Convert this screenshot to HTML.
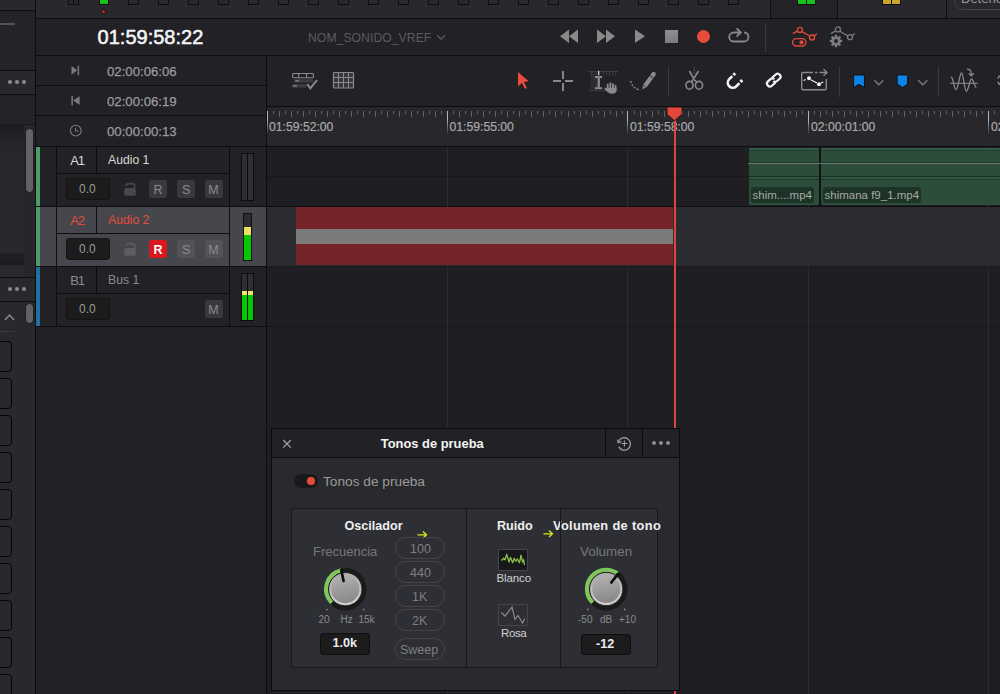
<!DOCTYPE html>
<html><head><meta charset="utf-8"><style>
*{box-sizing:border-box;margin:0;padding:0}
html,body{width:1000px;height:694px;overflow:hidden;background:#1f1f23;font-family:"Liberation Sans",sans-serif}
.a{position:absolute}
.hl{position:absolute;height:1px;background:#0d0d10}
.vl{position:absolute;width:1px;background:#0d0d10}
.t{position:absolute;white-space:nowrap;line-height:1}
svg{position:absolute;overflow:visible}
</style></head><body>
<div class="a" style="left:0px;top:0px;width:36px;height:694px;background:#28282d;"></div>
<div class="hl" style="left:0px;top:10px;width:36px;"></div>
<div class="a" style="left:0px;top:11px;width:35px;height:59px;background:#232328;"></div>
<div class="a" style="left:0px;top:23.2px;width:15px;height:1.6px;background:#4f535b;"></div>
<div class="hl" style="left:0px;top:70px;width:36px;"></div>
<div class="a" style="left:7.8px;top:79.6px;width:4.4px;height:4.4px;background:#8c8c8c;border-radius:50%"></div>
<div class="a" style="left:14.8px;top:79.6px;width:4.4px;height:4.4px;background:#8c8c8c;border-radius:50%"></div>
<div class="a" style="left:21.8px;top:79.6px;width:4.4px;height:4.4px;background:#8c8c8c;border-radius:50%"></div>
<div class="hl" style="left:0px;top:94px;width:36px;"></div>
<div class="a" style="left:0px;top:95px;width:35px;height:29px;background:#232328;"></div>
<div class="hl" style="left:0px;top:124px;width:36px;background:#18181b"></div>
<div class="a" style="left:0px;top:125px;width:24px;height:152px;background:linear-gradient(#1c1c20,#26262b 22px,#28282d 40px);"></div>
<div class="a" style="left:24px;top:125px;width:11px;height:152px;background:#26262b;"></div>
<div class="a" style="left:25px;top:127.5px;width:8.5px;height:65.5px;background:#5f6269;border-radius:4.3px;border:1px solid #1c1c20"></div>
<div class="a" style="left:0px;top:253px;width:24px;height:12px;background:linear-gradient(#202024,#1b1b1f);"></div>
<div class="hl" style="left:0px;top:277px;width:36px;"></div>
<div class="a" style="left:7.8px;top:286.5px;width:4.4px;height:4.4px;background:#8c8c8c;border-radius:50%"></div>
<div class="a" style="left:14.8px;top:286.5px;width:4.4px;height:4.4px;background:#8c8c8c;border-radius:50%"></div>
<div class="a" style="left:21.8px;top:286.5px;width:4.4px;height:4.4px;background:#8c8c8c;border-radius:50%"></div>
<div class="hl" style="left:0px;top:301px;width:36px;"></div>
<div class="a" style="left:25px;top:302.5px;width:8.5px;height:21px;background:#5f6269;border-radius:4.3px;border:1px solid #1c1c20"></div>
<svg style="left:4px;top:313px" width="11" height="8" viewBox="0 0 11 8"><path d="M1 7 L5.5 2 L10 7" fill="none" stroke="#8c8c8c" stroke-width="1.5"/></svg>
<div class="a" style="left:0px;top:331px;width:15px;height:1px;background:#3a3a40;"></div>
<div class="a" style="left:-6px;top:341px;width:17.5px;height:30.5px;background:transparent;border:1.5px solid #060607;border-radius:4px"></div>
<div class="a" style="left:-6px;top:378px;width:17.5px;height:30.5px;background:transparent;border:1.5px solid #060607;border-radius:4px"></div>
<div class="a" style="left:-6px;top:415px;width:17.5px;height:30.5px;background:transparent;border:1.5px solid #060607;border-radius:4px"></div>
<div class="a" style="left:-6px;top:452px;width:17.5px;height:30.5px;background:transparent;border:1.5px solid #060607;border-radius:4px"></div>
<div class="a" style="left:-6px;top:489px;width:17.5px;height:30.5px;background:transparent;border:1.5px solid #060607;border-radius:4px"></div>
<div class="a" style="left:-6px;top:526px;width:17.5px;height:30.5px;background:transparent;border:1.5px solid #060607;border-radius:4px"></div>
<div class="a" style="left:-6px;top:563px;width:17.5px;height:30.5px;background:transparent;border:1.5px solid #060607;border-radius:4px"></div>
<div class="a" style="left:-6px;top:600px;width:17.5px;height:30.5px;background:transparent;border:1.5px solid #060607;border-radius:4px"></div>
<div class="a" style="left:-6px;top:637px;width:17.5px;height:30.5px;background:transparent;border:1.5px solid #060607;border-radius:4px"></div>
<div class="a" style="left:-6px;top:674px;width:17.5px;height:30.5px;background:transparent;border:1.5px solid #060607;border-radius:4px"></div>
<div class="vl" style="left:35px;top:0px;height:694px;"></div>
<div class="a" style="left:36px;top:0px;width:964px;height:18px;background:#28282d;"></div>
<div class="a" style="left:771px;top:0px;width:67px;height:18px;background:#232328;"></div>
<div class="vl" style="left:770px;top:0px;height:18px;"></div>
<div class="vl" style="left:837px;top:0px;height:18px;"></div>
<div class="vl" style="left:946px;top:0px;height:18px;"></div>
<div class="a" style="left:68px;top:-1px;width:11px;height:6px;background:transparent;border:1px solid #0d0d10"></div>
<div class="vl" style="left:73px;top:0px;height:5px;"></div>
<div class="a" style="left:98.5px;top:-1px;width:10px;height:6px;background:#18c41c;border:1px solid #0d0d10"></div>
<div class="a" style="left:128px;top:-1px;width:11px;height:6px;background:transparent;border:1px solid #0d0d10"></div>
<div class="a" style="left:158px;top:-1px;width:11px;height:6px;background:transparent;border:1px solid #0d0d10"></div>
<div class="a" style="left:188px;top:-1px;width:11px;height:6px;background:transparent;border:1px solid #0d0d10"></div>
<div class="a" style="left:218px;top:-1px;width:11px;height:6px;background:transparent;border:1px solid #0d0d10"></div>
<div class="a" style="left:248px;top:-1px;width:11px;height:6px;background:transparent;border:1px solid #0d0d10"></div>
<div class="a" style="left:278px;top:-1px;width:11px;height:6px;background:transparent;border:1px solid #0d0d10"></div>
<div class="a" style="left:308px;top:-1px;width:11px;height:6px;background:transparent;border:1px solid #0d0d10"></div>
<div class="a" style="left:338px;top:-1px;width:11px;height:6px;background:transparent;border:1px solid #0d0d10"></div>
<div class="a" style="left:368px;top:-1px;width:11px;height:6px;background:transparent;border:1px solid #0d0d10"></div>
<div class="a" style="left:398px;top:-1px;width:11px;height:6px;background:transparent;border:1px solid #0d0d10"></div>
<div class="a" style="left:428px;top:-1px;width:11px;height:6px;background:transparent;border:1px solid #0d0d10"></div>
<div class="a" style="left:458px;top:-1px;width:11px;height:6px;background:transparent;border:1px solid #0d0d10"></div>
<div class="a" style="left:488px;top:-1px;width:11px;height:6px;background:transparent;border:1px solid #0d0d10"></div>
<div class="a" style="left:518px;top:-1px;width:11px;height:6px;background:transparent;border:1px solid #0d0d10"></div>
<div class="a" style="left:548px;top:-1px;width:11px;height:6px;background:transparent;border:1px solid #0d0d10"></div>
<div class="a" style="left:578px;top:-1px;width:11px;height:6px;background:transparent;border:1px solid #0d0d10"></div>
<div class="a" style="left:608px;top:-1px;width:11px;height:6px;background:transparent;border:1px solid #0d0d10"></div>
<div class="a" style="left:638px;top:-1px;width:11px;height:6px;background:transparent;border:1px solid #0d0d10"></div>
<div class="a" style="left:668px;top:-1px;width:11px;height:6px;background:transparent;border:1px solid #0d0d10"></div>
<div class="a" style="left:698px;top:-1px;width:11px;height:6px;background:transparent;border:1px solid #0d0d10"></div>
<div class="a" style="left:728px;top:-1px;width:11px;height:6px;background:transparent;border:1px solid #0d0d10"></div>
<div class="a" style="left:101.6px;top:9.5px;width:3.8px;height:3.8px;background:#e0202a;border-radius:50%;box-shadow:0 0 0 0.8px #111"></div>
<div class="a" style="left:797px;top:-1px;width:19px;height:6px;background:#18c41c;border:1px solid #0d0d10"></div>
<div class="vl" style="left:806px;top:0px;height:5px;"></div>
<div class="a" style="left:882px;top:-1px;width:19px;height:6px;background:#c9a52a;border:1px solid #0d0d10"></div>
<div class="vl" style="left:891px;top:0px;height:5px;"></div>
<div class="a" style="left:954px;top:-12px;width:70px;height:22px;background:transparent;border:1.3px solid #3f454b;border-radius:9px"></div>
<div class="t" style="left:961px;top:-8px;font-size:13px;color:#9a9a9a;font-weight:400;">Detener</div>
<div class="hl" style="left:36px;top:18px;width:964px;"></div>
<div class="a" style="left:36px;top:19px;width:964px;height:36px;background:#212126;"></div>
<div class="hl" style="left:36px;top:55px;width:964px;"></div>
<div class="a" style="left:36px;top:56px;width:230px;height:90px;background:#212126;"></div>
<div class="hl" style="left:36px;top:85px;width:230px;"></div>
<div class="hl" style="left:36px;top:115px;width:230px;"></div>
<div class="hl" style="left:36px;top:146px;width:964px;"></div>
<div class="a" style="left:267px;top:56px;width:733px;height:50px;background:#212126;"></div>
<div class="hl" style="left:266px;top:106px;width:734px;"></div>
<div class="a" style="left:267px;top:107px;width:733px;height:39px;background:#27272c;"></div>
<div class="vl" style="left:266px;top:55px;height:639px;"></div>
<div class="a" style="left:36px;top:147px;width:230px;height:547px;background:#222226;"></div>
<div class="t" style="left:97.6px;top:27px;font-size:20px;color:#f4f4f4;font-weight:400;-webkit-text-stroke:0.55px #f4f4f4">01:59:58:22</div>
<div class="t" style="left:107px;top:65px;font-size:13.2px;color:#9c9c9c;font-weight:400;-webkit-text-stroke:0.25px #9c9c9c">02:00:06:06</div>
<div class="t" style="left:107px;top:95px;font-size:13.2px;color:#9c9c9c;font-weight:400;-webkit-text-stroke:0.25px #9c9c9c">02:00:06:19</div>
<div class="t" style="left:107px;top:125px;font-size:13.2px;color:#9c9c9c;font-weight:400;-webkit-text-stroke:0.25px #9c9c9c">00:00:00:13</div>
<svg style="left:70px;top:64px" width="14" height="14" viewBox="0 0 14 14"><path d="M1.5 2 L7.3 6.3 L1.5 10.8 Z" fill="#7a7a7a"/><rect x="7.6" y="1.6" width="1.5" height="9.5" fill="#7a7a7a"/></svg>
<svg style="left:70px;top:94px" width="14" height="14" viewBox="0 0 14 14"><rect x="1.4" y="1.8" width="1.5" height="9.5" fill="#7a7a7a"/><path d="M9.6 2.2 L3.2 6.5 L9.6 10.9 Z" fill="#7a7a7a"/></svg>
<svg style="left:69px;top:124px" width="14" height="14" viewBox="0 0 14 14"><circle cx="6.8" cy="6.6" r="5.4" fill="none" stroke="#7a7a7a" stroke-width="1.15"/><path d="M6.6 3.6 V7 H9.6" fill="none" stroke="#7a7a7a" stroke-width="1.15"/></svg>
<div class="a" style="left:36px;top:147px;width:4px;height:59px;background:#4e9a6a;"></div>
<div class="a" style="left:40px;top:147px;width:226px;height:59px;background:#222226;"></div>
<div class="a" style="left:230px;top:147px;width:36px;height:59px;background:#222226;"></div>
<div class="vl" style="left:56px;top:146px;height:60px;"></div>
<div class="vl" style="left:96px;top:146px;height:27px;"></div>
<div class="hl" style="left:56px;top:173px;width:174px;"></div>
<div class="vl" style="left:229px;top:146px;height:60px;"></div>
<div class="t" style="left:70.3px;top:154px;font-size:13px;color:#d8d8d8;font-weight:400;letter-spacing:-1.2px">A1</div>
<div class="t" style="left:108px;top:154px;font-size:12.2px;color:#d8d8d8;font-weight:400;">Audio 1</div>
<div class="a" style="left:66px;top:178px;width:44px;height:21.5px;background:#1c1c1c;border:1px solid #141414;border-radius:3px"></div>
<div class="t" style="left:79px;top:183px;font-size:12px;color:#9a9a9a;font-weight:400;">0.0</div>
<svg style="left:123px;top:182px" width="14" height="15" viewBox="0 0 14 15"><path d="M2.6 3.8 Q3.6 1.6 5.6 1.6 H9.4 Q11.6 1.6 11.6 3.8 V6.5" fill="none" stroke="#48484c" stroke-width="1.6"/><rect x="1.1" y="6" width="11.7" height="7.8" rx="1.8" fill="#48484c"/></svg>
<div class="a" style="left:149px;top:180px;width:18px;height:18px;background:#3a3a3e;border-radius:3px"></div>
<div class="t" style="left:153.5px;top:184px;font-size:12.5px;color:#8a8a8a;font-weight:400;">R</div>
<div class="a" style="left:177px;top:180px;width:18px;height:18px;background:#3a3a3e;border-radius:3px"></div>
<div class="t" style="left:182px;top:184px;font-size:12.5px;color:#8a8a8a;font-weight:400;">S</div>
<div class="a" style="left:205px;top:180px;width:18px;height:18px;background:#3a3a3e;border-radius:3px"></div>
<div class="t" style="left:208.3px;top:184px;font-size:12.5px;color:#8a8a8a;font-weight:400;">M</div>
<div class="hl" style="left:36px;top:206px;width:230px;"></div>
<div class="a" style="left:36px;top:207px;width:4px;height:59px;background:#4e9a6a;"></div>
<div class="a" style="left:40px;top:207px;width:226px;height:59px;background:#45474d;"></div>
<div class="a" style="left:230px;top:207px;width:36px;height:59px;background:#45474d;"></div>
<div class="vl" style="left:56px;top:206px;height:60px;"></div>
<div class="vl" style="left:96px;top:206px;height:27px;"></div>
<div class="hl" style="left:56px;top:233px;width:174px;"></div>
<div class="vl" style="left:229px;top:206px;height:60px;"></div>
<div class="t" style="left:70.3px;top:214px;font-size:13px;color:#e64b3c;font-weight:400;letter-spacing:-1.2px">A2</div>
<div class="t" style="left:108px;top:214px;font-size:12.2px;color:#e64b3c;font-weight:400;">Audio 2</div>
<div class="a" style="left:66px;top:238px;width:44px;height:21.5px;background:#1c1c1c;border:1px solid #141414;border-radius:3px"></div>
<div class="t" style="left:79px;top:243px;font-size:12px;color:#9a9a9a;font-weight:400;">0.0</div>
<svg style="left:123px;top:242px" width="14" height="15" viewBox="0 0 14 15"><path d="M2.6 3.8 Q3.6 1.6 5.6 1.6 H9.4 Q11.6 1.6 11.6 3.8 V6.5" fill="none" stroke="#5c5d62" stroke-width="1.6"/><rect x="1.1" y="6" width="11.7" height="7.8" rx="1.8" fill="#5c5d62"/></svg>
<div class="a" style="left:149px;top:240px;width:18px;height:18px;background:#d9171d;border-radius:3px"></div>
<div class="t" style="left:153.5px;top:244px;font-size:12.5px;color:#ffffff;font-weight:700;">R</div>
<div class="a" style="left:177px;top:240px;width:18px;height:18px;background:#515359;border-radius:3px"></div>
<div class="t" style="left:182px;top:244px;font-size:12.5px;color:#8a8a8a;font-weight:400;">S</div>
<div class="a" style="left:205px;top:240px;width:18px;height:18px;background:#515359;border-radius:3px"></div>
<div class="t" style="left:208.3px;top:244px;font-size:12.5px;color:#8a8a8a;font-weight:400;">M</div>
<div class="hl" style="left:36px;top:266px;width:230px;"></div>
<div class="a" style="left:36px;top:267px;width:4px;height:59px;background:#2170a0;"></div>
<div class="a" style="left:40px;top:267px;width:226px;height:59px;background:#222226;"></div>
<div class="a" style="left:230px;top:267px;width:36px;height:59px;background:#222226;"></div>
<div class="vl" style="left:56px;top:266px;height:60px;"></div>
<div class="vl" style="left:96px;top:266px;height:27px;"></div>
<div class="hl" style="left:56px;top:293px;width:174px;"></div>
<div class="vl" style="left:229px;top:266px;height:60px;"></div>
<div class="t" style="left:70.3px;top:274px;font-size:13px;color:#8a8a8a;font-weight:400;letter-spacing:-1.2px">B1</div>
<div class="t" style="left:108px;top:274px;font-size:12.2px;color:#8a8a8a;font-weight:400;">Bus 1</div>
<div class="a" style="left:66px;top:298px;width:44px;height:21.5px;background:#1c1c1c;border:1px solid #141414;border-radius:3px"></div>
<div class="t" style="left:79px;top:303px;font-size:12px;color:#9a9a9a;font-weight:400;">0.0</div>
<div class="a" style="left:205px;top:300px;width:18px;height:18px;background:#3a3a3e;border-radius:3px"></div>
<div class="t" style="left:208.3px;top:304px;font-size:12.5px;color:#8a8a8a;font-weight:400;">M</div>
<div class="hl" style="left:36px;top:326px;width:230px;"></div>
<div class="a" style="left:241.2px;top:153px;width:12.6px;height:48px;background:#0c0c0e;"></div>
<div class="a" style="left:242px;top:154px;width:5px;height:46px;background:#2e2e33;"></div>
<div class="a" style="left:248px;top:154px;width:5px;height:46px;background:#2e2e33;"></div>
<div class="a" style="left:241.2px;top:273px;width:12.6px;height:48px;background:#0c0c0e;"></div>
<div class="a" style="left:242px;top:274px;width:5px;height:46px;background:#2e2e33;"></div>
<div class="a" style="left:248px;top:274px;width:5px;height:46px;background:#2e2e33;"></div>
<div class="a" style="left:242px;top:290.8px;width:5px;height:4px;background:#f0e26e;"></div>
<div class="a" style="left:242px;top:294.8px;width:5px;height:25.19999999999999px;background:#05c805;"></div>
<div class="a" style="left:248px;top:290.8px;width:5px;height:4px;background:#f0e26e;"></div>
<div class="a" style="left:248px;top:294.8px;width:5px;height:25.19999999999999px;background:#05c805;"></div>
<div class="a" style="left:243px;top:213px;width:9px;height:48px;background:#0f0f12;"></div>
<div class="a" style="left:244px;top:214px;width:7px;height:13px;background:#2c2c31;"></div>
<div class="a" style="left:244px;top:227px;width:7px;height:8px;background:#ece062;"></div>
<div class="a" style="left:244px;top:235px;width:7px;height:25px;background:#05c805;"></div>
<div class="a" style="left:267px;top:147px;width:733px;height:59px;background:#1f1f23;"></div>
<div class="hl" style="left:267px;top:176px;width:733px;background:#18181b"></div>
<div class="a" style="left:267px;top:207px;width:733px;height:59px;background:#2b2c30;"></div>
<div class="a" style="left:267px;top:267px;width:733px;height:427px;background:#1f1f23;"></div>
<div class="hl" style="left:267px;top:206px;width:733px;"></div>
<div class="hl" style="left:267px;top:265.5px;width:733px;background:#1a1a1d"></div>
<div class="hl" style="left:267px;top:326px;width:733px;background:#18181b"></div>
<div class="vl" style="left:447px;top:147px;height:547px;background:#2a2b2e"></div>
<div class="vl" style="left:627px;top:147px;height:547px;background:#2a2b2e"></div>
<div class="vl" style="left:808px;top:147px;height:547px;background:#2a2b2e"></div>
<div class="vl" style="left:988px;top:147px;height:547px;background:#2a2b2e"></div>
<div class="a" style="left:749px;top:148px;width:70px;height:57px;background:#2d4d3b;border-radius:2px"></div>
<div class="a" style="left:749px;top:148px;width:70px;height:2.3px;background:#335a44;border-radius:2px 2px 0 0"></div>
<div class="hl" style="left:749px;top:150.3px;width:70px;background:#243b2e"></div>
<div class="hl" style="left:749px;top:162.2px;width:70px;background:#233a2d"></div>
<div class="hl" style="left:749px;top:176px;width:70px;background:#1c2f24"></div>
<div class="a" style="left:749px;top:177px;width:70px;height:2px;background:#315542;"></div>
<div class="hl" style="left:749px;top:179px;width:70px;background:#1f3629"></div>
<div class="a" style="left:751px;top:187px;width:63px;height:15.5px;background:#1e3327;border-radius:3px"></div>
<div class="t" style="left:752.5px;top:189.5px;font-size:11.5px;color:#a6aaa6;font-weight:400;">shim....mp4</div>
<div class="a" style="left:821px;top:148px;width:200px;height:57px;background:#2d4d3b;border-radius:2px"></div>
<div class="a" style="left:821px;top:148px;width:200px;height:2.3px;background:#335a44;border-radius:2px 2px 0 0"></div>
<div class="hl" style="left:821px;top:150.3px;width:200px;background:#243b2e"></div>
<div class="hl" style="left:821px;top:162.2px;width:200px;background:#233a2d"></div>
<div class="hl" style="left:821px;top:176px;width:200px;background:#1c2f24"></div>
<div class="a" style="left:821px;top:177px;width:200px;height:2px;background:#315542;"></div>
<div class="hl" style="left:821px;top:179px;width:200px;background:#1f3629"></div>
<div class="a" style="left:823px;top:187px;width:97.5px;height:15.5px;background:#1e3327;border-radius:3px"></div>
<div class="t" style="left:824.5px;top:189.5px;font-size:11.5px;color:#a6aaa6;font-weight:400;">shimana f9_1.mp4</div>
<div class="a" style="left:819px;top:147px;width:2px;height:59px;background:#131316;"></div>
<div class="hl" style="left:748px;top:163px;width:252px;background:#6d7a72"></div>
<div class="a" style="left:296px;top:207px;width:377px;height:58px;background:#76232a;"></div>
<div class="a" style="left:296px;top:229px;width:377px;height:15px;background:#7b7b7b;"></div>
<div class="a" style="left:273px;top:111px;width:1px;height:3px;background:#626268;"></div>
<div class="a" style="left:279px;top:111px;width:1px;height:6px;background:#626268;"></div>
<div class="a" style="left:285px;top:111px;width:1px;height:3px;background:#626268;"></div>
<div class="a" style="left:291px;top:111px;width:1px;height:6px;background:#626268;"></div>
<div class="a" style="left:297px;top:111px;width:1px;height:3px;background:#626268;"></div>
<div class="a" style="left:303px;top:111px;width:1px;height:6px;background:#626268;"></div>
<div class="a" style="left:309px;top:111px;width:1px;height:3px;background:#626268;"></div>
<div class="a" style="left:315px;top:111px;width:1px;height:6px;background:#626268;"></div>
<div class="a" style="left:321px;top:111px;width:1px;height:3px;background:#626268;"></div>
<div class="a" style="left:327px;top:111px;width:1px;height:6px;background:#626268;"></div>
<div class="a" style="left:333px;top:111px;width:1px;height:3px;background:#626268;"></div>
<div class="a" style="left:339px;top:111px;width:1px;height:6px;background:#626268;"></div>
<div class="a" style="left:345px;top:111px;width:1px;height:3px;background:#626268;"></div>
<div class="a" style="left:351px;top:111px;width:1px;height:6px;background:#626268;"></div>
<div class="a" style="left:357px;top:111px;width:1px;height:3px;background:#626268;"></div>
<div class="a" style="left:363px;top:111px;width:1px;height:6px;background:#626268;"></div>
<div class="a" style="left:369px;top:111px;width:1px;height:3px;background:#626268;"></div>
<div class="a" style="left:375px;top:111px;width:1px;height:6px;background:#626268;"></div>
<div class="a" style="left:381px;top:111px;width:1px;height:3px;background:#626268;"></div>
<div class="a" style="left:387px;top:111px;width:1px;height:6px;background:#626268;"></div>
<div class="a" style="left:393px;top:111px;width:1px;height:3px;background:#626268;"></div>
<div class="a" style="left:399px;top:111px;width:1px;height:6px;background:#626268;"></div>
<div class="a" style="left:405px;top:111px;width:1px;height:3px;background:#626268;"></div>
<div class="a" style="left:411px;top:111px;width:1px;height:6px;background:#626268;"></div>
<div class="a" style="left:417px;top:111px;width:1px;height:3px;background:#626268;"></div>
<div class="a" style="left:423px;top:111px;width:1px;height:6px;background:#626268;"></div>
<div class="a" style="left:429px;top:111px;width:1px;height:3px;background:#626268;"></div>
<div class="a" style="left:435px;top:111px;width:1px;height:6px;background:#626268;"></div>
<div class="a" style="left:441px;top:111px;width:1px;height:3px;background:#626268;"></div>
<div class="a" style="left:453px;top:111px;width:1px;height:3px;background:#626268;"></div>
<div class="a" style="left:459px;top:111px;width:1px;height:6px;background:#626268;"></div>
<div class="a" style="left:465px;top:111px;width:1px;height:3px;background:#626268;"></div>
<div class="a" style="left:471px;top:111px;width:1px;height:6px;background:#626268;"></div>
<div class="a" style="left:477px;top:111px;width:1px;height:3px;background:#626268;"></div>
<div class="a" style="left:483px;top:111px;width:1px;height:6px;background:#626268;"></div>
<div class="a" style="left:489px;top:111px;width:1px;height:3px;background:#626268;"></div>
<div class="a" style="left:495px;top:111px;width:1px;height:6px;background:#626268;"></div>
<div class="a" style="left:501px;top:111px;width:1px;height:3px;background:#626268;"></div>
<div class="a" style="left:507px;top:111px;width:1px;height:6px;background:#626268;"></div>
<div class="a" style="left:513px;top:111px;width:1px;height:3px;background:#626268;"></div>
<div class="a" style="left:519px;top:111px;width:1px;height:6px;background:#626268;"></div>
<div class="a" style="left:525px;top:111px;width:1px;height:3px;background:#626268;"></div>
<div class="a" style="left:531px;top:111px;width:1px;height:6px;background:#626268;"></div>
<div class="a" style="left:537px;top:111px;width:1px;height:3px;background:#626268;"></div>
<div class="a" style="left:543px;top:111px;width:1px;height:6px;background:#626268;"></div>
<div class="a" style="left:549px;top:111px;width:1px;height:3px;background:#626268;"></div>
<div class="a" style="left:555px;top:111px;width:1px;height:6px;background:#626268;"></div>
<div class="a" style="left:561px;top:111px;width:1px;height:3px;background:#626268;"></div>
<div class="a" style="left:568px;top:111px;width:1px;height:6px;background:#626268;"></div>
<div class="a" style="left:574px;top:111px;width:1px;height:3px;background:#626268;"></div>
<div class="a" style="left:580px;top:111px;width:1px;height:6px;background:#626268;"></div>
<div class="a" style="left:586px;top:111px;width:1px;height:3px;background:#626268;"></div>
<div class="a" style="left:592px;top:111px;width:1px;height:6px;background:#626268;"></div>
<div class="a" style="left:598px;top:111px;width:1px;height:3px;background:#626268;"></div>
<div class="a" style="left:604px;top:111px;width:1px;height:6px;background:#626268;"></div>
<div class="a" style="left:610px;top:111px;width:1px;height:3px;background:#626268;"></div>
<div class="a" style="left:616px;top:111px;width:1px;height:6px;background:#626268;"></div>
<div class="a" style="left:622px;top:111px;width:1px;height:3px;background:#626268;"></div>
<div class="a" style="left:634px;top:111px;width:1px;height:3px;background:#626268;"></div>
<div class="a" style="left:640px;top:111px;width:1px;height:6px;background:#626268;"></div>
<div class="a" style="left:646px;top:111px;width:1px;height:3px;background:#626268;"></div>
<div class="a" style="left:652px;top:111px;width:1px;height:6px;background:#626268;"></div>
<div class="a" style="left:658px;top:111px;width:1px;height:3px;background:#626268;"></div>
<div class="a" style="left:664px;top:111px;width:1px;height:6px;background:#626268;"></div>
<div class="a" style="left:670px;top:111px;width:1px;height:3px;background:#626268;"></div>
<div class="a" style="left:676px;top:111px;width:1px;height:6px;background:#626268;"></div>
<div class="a" style="left:682px;top:111px;width:1px;height:3px;background:#626268;"></div>
<div class="a" style="left:688px;top:111px;width:1px;height:6px;background:#626268;"></div>
<div class="a" style="left:694px;top:111px;width:1px;height:3px;background:#626268;"></div>
<div class="a" style="left:700px;top:111px;width:1px;height:6px;background:#626268;"></div>
<div class="a" style="left:706px;top:111px;width:1px;height:3px;background:#626268;"></div>
<div class="a" style="left:712px;top:111px;width:1px;height:6px;background:#626268;"></div>
<div class="a" style="left:718px;top:111px;width:1px;height:3px;background:#626268;"></div>
<div class="a" style="left:724px;top:111px;width:1px;height:6px;background:#626268;"></div>
<div class="a" style="left:730px;top:111px;width:1px;height:3px;background:#626268;"></div>
<div class="a" style="left:736px;top:111px;width:1px;height:6px;background:#626268;"></div>
<div class="a" style="left:742px;top:111px;width:1px;height:3px;background:#626268;"></div>
<div class="a" style="left:748px;top:111px;width:1px;height:6px;background:#626268;"></div>
<div class="a" style="left:754px;top:111px;width:1px;height:3px;background:#626268;"></div>
<div class="a" style="left:760px;top:111px;width:1px;height:6px;background:#626268;"></div>
<div class="a" style="left:766px;top:111px;width:1px;height:3px;background:#626268;"></div>
<div class="a" style="left:772px;top:111px;width:1px;height:6px;background:#626268;"></div>
<div class="a" style="left:778px;top:111px;width:1px;height:3px;background:#626268;"></div>
<div class="a" style="left:784px;top:111px;width:1px;height:6px;background:#626268;"></div>
<div class="a" style="left:790px;top:111px;width:1px;height:3px;background:#626268;"></div>
<div class="a" style="left:796px;top:111px;width:1px;height:6px;background:#626268;"></div>
<div class="a" style="left:802px;top:111px;width:1px;height:3px;background:#626268;"></div>
<div class="a" style="left:814px;top:111px;width:1px;height:3px;background:#626268;"></div>
<div class="a" style="left:820px;top:111px;width:1px;height:6px;background:#626268;"></div>
<div class="a" style="left:826px;top:111px;width:1px;height:3px;background:#626268;"></div>
<div class="a" style="left:832px;top:111px;width:1px;height:6px;background:#626268;"></div>
<div class="a" style="left:838px;top:111px;width:1px;height:3px;background:#626268;"></div>
<div class="a" style="left:844px;top:111px;width:1px;height:6px;background:#626268;"></div>
<div class="a" style="left:850px;top:111px;width:1px;height:3px;background:#626268;"></div>
<div class="a" style="left:856px;top:111px;width:1px;height:6px;background:#626268;"></div>
<div class="a" style="left:862px;top:111px;width:1px;height:3px;background:#626268;"></div>
<div class="a" style="left:868px;top:111px;width:1px;height:6px;background:#626268;"></div>
<div class="a" style="left:874px;top:111px;width:1px;height:3px;background:#626268;"></div>
<div class="a" style="left:880px;top:111px;width:1px;height:6px;background:#626268;"></div>
<div class="a" style="left:886px;top:111px;width:1px;height:3px;background:#626268;"></div>
<div class="a" style="left:892px;top:111px;width:1px;height:6px;background:#626268;"></div>
<div class="a" style="left:898px;top:111px;width:1px;height:3px;background:#626268;"></div>
<div class="a" style="left:904px;top:111px;width:1px;height:6px;background:#626268;"></div>
<div class="a" style="left:910px;top:111px;width:1px;height:3px;background:#626268;"></div>
<div class="a" style="left:916px;top:111px;width:1px;height:6px;background:#626268;"></div>
<div class="a" style="left:922px;top:111px;width:1px;height:3px;background:#626268;"></div>
<div class="a" style="left:928px;top:111px;width:1px;height:6px;background:#626268;"></div>
<div class="a" style="left:934px;top:111px;width:1px;height:3px;background:#626268;"></div>
<div class="a" style="left:940px;top:111px;width:1px;height:6px;background:#626268;"></div>
<div class="a" style="left:946px;top:111px;width:1px;height:3px;background:#626268;"></div>
<div class="a" style="left:952px;top:111px;width:1px;height:6px;background:#626268;"></div>
<div class="a" style="left:958px;top:111px;width:1px;height:3px;background:#626268;"></div>
<div class="a" style="left:964px;top:111px;width:1px;height:6px;background:#626268;"></div>
<div class="a" style="left:970px;top:111px;width:1px;height:3px;background:#626268;"></div>
<div class="a" style="left:976px;top:111px;width:1px;height:6px;background:#626268;"></div>
<div class="a" style="left:982px;top:111px;width:1px;height:3px;background:#626268;"></div>
<div class="a" style="left:994px;top:111px;width:1px;height:3px;background:#626268;"></div>
<div class="a" style="left:1000px;top:111px;width:1px;height:6px;background:#626268;"></div>
<div class="a" style="left:267px;top:111px;width:1.3px;height:24px;background:linear-gradient(#b4b4b4,#b4b4b4 35%,rgba(180,180,180,0));"></div>
<div class="a" style="left:447px;top:111px;width:1.3px;height:24px;background:linear-gradient(#b4b4b4,#b4b4b4 35%,rgba(180,180,180,0));"></div>
<div class="a" style="left:627px;top:111px;width:1.3px;height:24px;background:linear-gradient(#b4b4b4,#b4b4b4 35%,rgba(180,180,180,0));"></div>
<div class="a" style="left:808px;top:111px;width:1.3px;height:24px;background:linear-gradient(#b4b4b4,#b4b4b4 35%,rgba(180,180,180,0));"></div>
<div class="a" style="left:988px;top:111px;width:1.3px;height:24px;background:linear-gradient(#b4b4b4,#b4b4b4 35%,rgba(180,180,180,0));"></div>
<div class="t" style="left:269px;top:120.5px;font-size:12.2px;color:#aaaaaa;font-weight:400;-webkit-text-stroke:0.2px #aaaaaa">01:59:52:00</div>
<div class="t" style="left:449.5px;top:120.5px;font-size:12.2px;color:#aaaaaa;font-weight:400;-webkit-text-stroke:0.2px #aaaaaa">01:59:55:00</div>
<div class="t" style="left:630px;top:120.5px;font-size:12.2px;color:#aaaaaa;font-weight:400;-webkit-text-stroke:0.2px #aaaaaa">01:59:58:00</div>
<div class="t" style="left:811px;top:120.5px;font-size:12.2px;color:#aaaaaa;font-weight:400;-webkit-text-stroke:0.2px #aaaaaa">02:00:01:00</div>
<div class="t" style="left:991px;top:120.5px;font-size:12.2px;color:#aaaaaa;font-weight:400;-webkit-text-stroke:0.2px #aaaaaa">02:00:04:00</div>
<div class="a" style="left:673.5px;top:119px;width:2px;height:575px;background:#dc463a;"></div>
<svg style="left:666px;top:106px" width="17" height="15" viewBox="0 0 17 15"><path d="M1 1 H16 V7.5 Q16 8.2 15.4 8.8 L9 14.3 Q8.5 14.8 8 14.3 L1.6 8.8 Q1 8.2 1 7.5 Z" fill="#e2473a" stroke="#141414" stroke-width="0.8"/></svg>
<div class="t" style="left:308px;top:31.5px;font-size:12.2px;color:#5c5c62;font-weight:400;letter-spacing:0.05px">NOM_SONIDO_VREF</div>
<svg style="left:436px;top:34px" width="10" height="7" viewBox="0 0 10 7"><path d="M1 1.2 L5 5.2 L9 1.2" fill="none" stroke="#5c5c62" stroke-width="1.3"/></svg>
<svg style="left:559px;top:29px" width="20" height="15" viewBox="0 0 20 15"><path d="M1 7.3 L10 0.6 V14 Z M10 7.3 L19 0.6 V14 Z" fill="#8a8a8a"/></svg>
<svg style="left:596px;top:29px" width="20" height="15" viewBox="0 0 20 15"><path d="M1 0.6 L10 7.3 L1 14 Z M10 0.6 L19 7.3 L10 14 Z" fill="#8a8a8a"/></svg>
<svg style="left:634px;top:29px" width="12" height="15" viewBox="0 0 12 15"><path d="M1 0.6 L11 7.3 L1 14 Z" fill="#8a8a8a"/></svg>
<div class="a" style="left:665px;top:30px;width:13px;height:13px;background:linear-gradient(#8e8e8e,#7c7c7c);"></div>
<div class="a" style="left:697px;top:30px;width:13.4px;height:13.4px;background:#e84c3d;border-radius:50%"></div>
<svg style="left:727px;top:27px" width="24" height="18" viewBox="0 0 24 18"><path d="M13.6 5.5 H6.7 A4.5 4.5 0 0 0 6.7 14.5 H16.8 A4.5 4.5 0 0 0 17.2 5.5" fill="none" stroke="#8a8a8a" stroke-width="1.8"/><path d="M9.6 1.4 L13.8 5.5 L9.6 9.6" fill="none" stroke="#8a8a8a" stroke-width="1.8"/></svg>
<div class="vl" style="left:765px;top:23px;height:29px;background:#3a3a40"></div>
<svg style="left:791px;top:26px" width="28" height="22" viewBox="0 0 28 22"><path d="M1.8 7.6 L6.6 4.9" stroke="#e0483a" stroke-width="1.4"/><circle cx="8.9" cy="3.9" r="2.5" fill="none" stroke="#e0483a" stroke-width="1.4"/><path d="M10.8 5.6 L19 10" stroke="#e0483a" stroke-width="1.4"/><circle cx="21" cy="11.5" r="2.5" fill="none" stroke="#e0483a" stroke-width="1.4"/><path d="M23 10.1 L26 7.8" stroke="#e0483a" stroke-width="1.4"/><rect x="1.6" y="12.6" width="13.4" height="7.4" rx="3.7" fill="none" stroke="#e0483a" stroke-width="1.4"/><circle cx="10.5" cy="16.3" r="2.1" fill="#e0483a"/></svg>
<svg style="left:829px;top:26px" width="28" height="22" viewBox="0 0 28 22"><path d="M1.8 7.6 L6.6 4.9" stroke="#7c7c7c" stroke-width="1.3"/><circle cx="8.9" cy="3.4" r="2.5" fill="none" stroke="#7c7c7c" stroke-width="1.3"/><path d="M10.8 5.2 L19 10" stroke="#7c7c7c" stroke-width="1.3"/><circle cx="21" cy="11.2" r="2.5" fill="none" stroke="#7c7c7c" stroke-width="1.3"/><path d="M23 9.8 L26 7.5" stroke="#7c7c7c" stroke-width="1.3"/><circle cx="7" cy="15" r="4.6" fill="#7c7c7c"/><rect x="5.80" y="8.80" width="2.4" height="3" transform="rotate(0 7 15)" fill="#7c7c7c"/><rect x="5.80" y="8.80" width="2.4" height="3" transform="rotate(45 7 15)" fill="#7c7c7c"/><rect x="5.80" y="8.80" width="2.4" height="3" transform="rotate(90 7 15)" fill="#7c7c7c"/><rect x="5.80" y="8.80" width="2.4" height="3" transform="rotate(135 7 15)" fill="#7c7c7c"/><rect x="5.80" y="8.80" width="2.4" height="3" transform="rotate(180 7 15)" fill="#7c7c7c"/><rect x="5.80" y="8.80" width="2.4" height="3" transform="rotate(225 7 15)" fill="#7c7c7c"/><rect x="5.80" y="8.80" width="2.4" height="3" transform="rotate(270 7 15)" fill="#7c7c7c"/><rect x="5.80" y="8.80" width="2.4" height="3" transform="rotate(315 7 15)" fill="#7c7c7c"/><circle cx="7" cy="15" r="2" fill="#212126"/></svg>
<svg style="left:291px;top:71px" width="28" height="20" viewBox="0 0 28 20"><rect x="1.6" y="2.5" width="20.8" height="4.2" rx="0.9" fill="none" stroke="#8a8a8a" stroke-width="1.1"/><path d="M7.7 2.5 V6.7 M15.6 2.5 V6.7" stroke="#8a8a8a" stroke-width="1.1"/><rect x="3" y="8.2" width="19" height="3.3" fill="#3c3c41"/><rect x="1" y="13.2" width="14.5" height="3.4" fill="#3c3c41"/><path d="M4.5 9.9 H8 M2 14.9 H6" stroke="#8e8e8e" stroke-width="1.1"/><path d="M16.2 13 L19.3 17.4 L26 9.2" fill="none" stroke="#8a8a8a" stroke-width="2"/></svg>
<svg style="left:332px;top:71px" width="24" height="19" viewBox="0 0 24 19"><rect x="1.5" y="1.5" width="20" height="15.5" rx="0.8" fill="#36363b" stroke="#8a8a8a" stroke-width="1.2"/><path d="M6.5 1.5 V17 M11.5 1.5 V17 M16.5 1.5 V17 M1.5 6.5 H21.5 M1.5 11.5 H21.5" stroke="#8a8a8a" stroke-width="1"/></svg>
<svg style="left:517px;top:71px" width="14" height="19" viewBox="0 0 14 19"><path d="M1 1 L11.6 10.3 L6.8 11 L9.6 16.2 Q9.9 17.3 8.8 17.6 Q7.9 17.8 7.5 17 L4.8 12 L1 15.4 Z" fill="#e84c3d"/></svg>
<svg style="left:552px;top:70px" width="22" height="22" viewBox="0 0 22 22"><path d="M11 1 V9 M11 13 V21 M1 11 H9 M13 11 H21" stroke="#8a8a8a" stroke-width="1.9"/></svg>
<svg style="left:587px;top:70px" width="32" height="25" viewBox="0 0 32 25"><rect x="3.5" y="1.2" width="7" height="19.8" fill="#2c2c31"/><path d="M1 1.5 H31 M1 20.8 H31" stroke="#3c3c42" stroke-width="1"/><path d="M4.5 2 V6.5 M16.5 2 V5.5 M19.5 2 V5.5 M22.5 2 V5.5 M25.5 2 V5.5 M28.5 2 V5.5" stroke="#3c3c42" stroke-width="0.9"/><rect x="8" y="6" width="7.2" height="2" fill="#8a8a8a"/><rect x="10.6" y="7.5" width="2.3" height="10.2" fill="#8a8a8a"/><rect x="8" y="17.2" width="7.2" height="2" fill="#8a8a8a"/><rect x="11" y="0.8" width="1.4" height="4.4" fill="#c4c4c4"/><g stroke="#8a8a8a" stroke-width="1.9" stroke-linecap="round" fill="none"><path d="M20.7 14.4 V19.5 M23.4 13.1 V19.5 M26 14.1 V19.5 M28.5 15.7 V20"/><path d="M18.3 18.5 L20.9 21.2"/></g><path d="M19.8 18 H29.4 V20.5 Q29.4 23.8 24.6 23.8 Q21.6 23.8 20.4 21.6 Z" fill="#8a8a8a"/></svg>
<svg style="left:629px;top:71px" width="28" height="22" viewBox="0 0 28 22"><path d="M1.6 9.8 Q3.2 17.6 11.4 19" fill="none" stroke="#8a8a8a" stroke-width="1.3" stroke-dasharray="2.2 1.3"/><path d="M13.5 18.3 L17.63 16.35 L26.45 4.22 A2.2 2.2 0 0 0 22.89 1.64 L14.07 13.77 Z" fill="#8a8a8a"/><path d="M24.38 7.05 L20.82 4.47" stroke="#212126" stroke-width="0.9"/><path d="M17.4 16.6 L14 14.2" stroke="#212126" stroke-width="0.7"/></svg>
<div class="vl" style="left:668px;top:66px;height:31px;background:#3a3a40"></div>
<svg style="left:684px;top:66px" width="21" height="26" viewBox="0 0 21 26"><ellipse cx="5.5" cy="19.3" rx="3.6" ry="3.9" fill="none" stroke="#8a8a8a" stroke-width="1.6"/><ellipse cx="15" cy="19.3" rx="3.6" ry="3.9" fill="none" stroke="#8a8a8a" stroke-width="1.6"/><path d="M14.6 5 L7.6 15.9" stroke="#8a8a8a" stroke-width="1.7"/><path d="M5.4 5 L9.3 11.9" stroke="#8a8a8a" stroke-width="1.7"/><path d="M10.2 13.6 L12.8 16.2" stroke="#8a8a8a" stroke-width="1.5"/><path d="M10.3 0.8 V9.5" stroke="#6e6e72" stroke-width="0.9" stroke-dasharray="1.4 1.4"/></svg>
<svg style="left:722px;top:66px" width="30" height="30" viewBox="0 0 30 30"><path d="M10.3 10.12 L7.26 13.16 A5 5 0 0 0 14.34 20.24 L17.38 17.2" fill="none" stroke="#f4f4f4" stroke-width="2.6"/><path d="M11.4 9.02 L13.2 7.22 M18.48 15.9 L20.28 14.1" stroke="#f4f4f4" stroke-width="2.9"/></svg>
<svg style="left:762px;top:68px" width="24" height="24" viewBox="0 0 24 24"><g transform="translate(11.8 12.1) rotate(-42)" fill="none" stroke="#f4f4f4" stroke-width="2.2"><path d="M0.2 -2.9 H5.2 A2.9 2.9 0 0 1 5.2 2.9 H1.5 A2.4 2.4 0 0 1 -0.8 0.3"/><path d="M-0.2 2.9 H-5.2 A2.9 2.9 0 0 1 -5.2 -2.9 H-1.5 A2.4 2.4 0 0 1 0.8 -0.3"/></g></svg>
<svg style="left:800px;top:68px" width="30" height="24" viewBox="0 0 30 24"><path d="M13 4.5 H2.8 Q1.7 4.5 1.7 5.6 V20.6 Q1.7 21.7 2.8 21.7 H25.2 Q26.3 21.7 26.3 20.6 V11" fill="none" stroke="#8a8a8a" stroke-width="1.4"/><path d="M15 4.5 H17.5 M19.5 4.5 H27" stroke="#8a8a8a" stroke-width="1.4"/><path d="M23.5 1.3 L27 4.5 L23.5 7.7" fill="none" stroke="#8a8a8a" stroke-width="1.4"/><circle cx="9" cy="10.2" r="2" fill="#f2f2f2"/><circle cx="19" cy="16.2" r="2" fill="#f2f2f2"/><path d="M3.6 12.5 L5.6 11.4 M10.8 11.8 L17 15 M21 15 L23.3 14" stroke="#f2f2f2" stroke-width="1.1"/></svg>
<div class="vl" style="left:839px;top:66px;height:31px;background:#3a3a40"></div>
<svg style="left:852px;top:73.6px" width="14" height="15" viewBox="0 0 14 15"><path d="M1.6 1 H12.4 V13.4 L7 10.3 L1.6 13.4 Z" fill="#0b84ea" stroke="#0c0c0e" stroke-width="0.9"/></svg>
<svg style="left:872.6px;top:78.6px" width="12" height="8" viewBox="0 0 12 8"><path d="M1.3 1.3 L5.8 5.8 L10.3 1.3" fill="none" stroke="#7a7a7a" stroke-width="1.4"/></svg>
<svg style="left:896px;top:73.6px" width="13" height="15" viewBox="0 0 13 15"><path d="M2.4 1 H10.4 Q11.6 1 11.6 2.2 V10 L6.5 13.6 L1.2 10 V2.2 Q1.2 1 2.4 1 Z" fill="#0b84ea" stroke="#0c0c0e" stroke-width="0.9"/></svg>
<svg style="left:916.6px;top:78.6px" width="12" height="8" viewBox="0 0 12 8"><path d="M1.3 1.3 L5.8 5.8 L10.3 1.3" fill="none" stroke="#7a7a7a" stroke-width="1.4"/></svg>
<div class="vl" style="left:938px;top:66px;height:31px;background:#3a3a40"></div>
<svg style="left:949px;top:66px" width="32" height="28" viewBox="0 0 32 28"><path d="M1.2 17.3 H28.8" stroke="#8a8a8a" stroke-width="1.1"/><path d="M2.0 11.3 C4.0 10.5 5.3 23.7 7.2 23.7 C9.2 23.7 10.6 7.0 12.5 7.0 C14.4 7.0 15.5 25.3 17.4 25.3 C19.3 25.3 20.7 13.0 22.5 13.0 C24.3 13.0 25.3 20.5 27.3 21.6" fill="none" stroke="#8a8a8a" stroke-width="1.3"/><path d="M18.0 3.3 Q22.8 2.8 22.3 9.5" fill="none" stroke="#8a8a8a" stroke-width="1.3"/><path d="M19.9 7.2 L22.3 9.8 L24.8 7.2" fill="none" stroke="#8a8a8a" stroke-width="1.3"/></svg>
<svg style="left:996px;top:72px" width="8" height="18" viewBox="0 0 8 18"><path d="M6.5 3.5 Q2.5 3.5 2.2 6.5 M2.2 9.8 Q2.5 13 6.5 13" fill="none" stroke="#8a8a8a" stroke-width="1.6"/></svg>
<div class="a" style="left:270.5px;top:428px;width:409.5px;height:263px;background:#29292e;border:1px solid #0b0b0d"></div>
<div class="a" style="left:271.5px;top:429px;width:407.5px;height:28px;background:#222226;"></div>
<div class="hl" style="left:271px;top:457px;width:408px;"></div>
<div class="vl" style="left:605px;top:429px;height:28px;"></div>
<div class="vl" style="left:642px;top:429px;height:28px;"></div>
<svg style="left:282px;top:439px" width="10" height="10" viewBox="0 0 10 10"><path d="M1.2 1 L8.8 8.6 M8.8 1 L1.2 8.6" stroke="#a8a8a8" stroke-width="1.15"/></svg>
<div class="t" style="left:380.8px;top:438.3px;font-size:12.9px;color:#f4f4f4;font-weight:700;">Tonos de prueba</div>
<svg style="left:615px;top:435px" width="18" height="18" viewBox="0 0 18 18"><path d="M3.6 6.4 A6.2 6.2 0 1 1 3.8 11.9" fill="none" stroke="#999" stroke-width="1.3"/><path d="M2.4 4.6 L3.3 7.6 L6.4 6.7" fill="none" stroke="#999" stroke-width="1.3"/><path d="M9.4 5.6 V11.4 M6.5 8.5 H12.3" stroke="#a0a0a0" stroke-width="1.1"/></svg>
<div class="a" style="left:651.9px;top:441px;width:4.2px;height:4.2px;background:#8e8e8e;border-radius:50%"></div>
<div class="a" style="left:658.9px;top:441px;width:4.2px;height:4.2px;background:#8e8e8e;border-radius:50%"></div>
<div class="a" style="left:665.9px;top:441px;width:4.2px;height:4.2px;background:#8e8e8e;border-radius:50%"></div>
<div class="a" style="left:294px;top:474px;width:24px;height:14px;background:#19191b;border-radius:7px"></div>
<div class="a" style="left:306.8px;top:476.8px;width:8.4px;height:8.4px;background:#e84c3d;border-radius:50%"></div>
<div class="t" style="left:323px;top:474.8px;font-size:13.7px;color:#9a9a9a;font-weight:400;">Tonos de prueba</div>
<div class="a" style="left:290.5px;top:508px;width:367.5px;height:159.5px;background:#2e2f34;border:1px solid #18181b;border-radius:3px"></div>
<div class="vl" style="left:465.5px;top:509px;height:158px;background:#18181b"></div>
<div class="vl" style="left:559.5px;top:509px;height:158px;background:#18181b"></div>
<div class="t" style="left:344.5px;top:520px;font-size:12.6px;color:#f0f0f0;font-weight:700;">Oscilador</div>
<div class="t" style="left:497px;top:520px;font-size:12.6px;color:#f0f0f0;font-weight:700;">Ruido</div>
<div class="t" style="left:553px;top:519.5px;font-size:12.8px;color:#f0f0f0;font-weight:700;letter-spacing:0.35px">Volumen de tono</div>
<div class="vl" style="left:559.5px;top:509px;height:158px;background:#18181b"></div>
<svg style="left:417px;top:531px" width="11" height="8" viewBox="0 0 11 8"><path d="M0.5 3.8 H9.5 M6 0.6 L9.5 3.8 L6 7" fill="none" stroke="#d8e61a" stroke-width="1.3"/></svg>
<svg style="left:543px;top:530px" width="11" height="8" viewBox="0 0 11 8"><path d="M0.5 3.8 H9.5 M6 0.6 L9.5 3.8 L6 7" fill="none" stroke="#d8e61a" stroke-width="1.3"/></svg>
<div class="t" style="left:313px;top:545px;font-size:13px;color:#77777b;font-weight:400;">Frecuencia</div>
<div class="t" style="left:580px;top:545px;font-size:13.4px;color:#77777b;font-weight:400;">Volumen</div>
<div class="a" style="left:395px;top:537px;width:50px;height:21.8px;background:transparent;border:1px solid #45454a;border-radius:11px"></div>
<div class="a" style="left:395px;top:561px;width:50px;height:21.8px;background:transparent;border:1px solid #45454a;border-radius:11px"></div>
<div class="a" style="left:395px;top:585px;width:50px;height:21.8px;background:transparent;border:1px solid #45454a;border-radius:11px"></div>
<div class="a" style="left:395px;top:609px;width:50px;height:21.8px;background:transparent;border:1px solid #45454a;border-radius:11px"></div>
<div class="a" style="left:395px;top:638px;width:50px;height:21.5px;background:transparent;border:1px solid #45454a;border-radius:11px"></div>
<div class="t" style="left:410px;top:543px;font-size:12.5px;color:#7e7e82;font-weight:400;">100</div>
<div class="t" style="left:410px;top:567px;font-size:12.5px;color:#7e7e82;font-weight:400;">440</div>
<div class="t" style="left:412px;top:591px;font-size:12.5px;color:#7e7e82;font-weight:400;">1K</div>
<div class="t" style="left:412px;top:615px;font-size:12.5px;color:#7e7e82;font-weight:400;">2K</div>
<div class="t" style="left:400px;top:644px;font-size:12.5px;color:#7e7e82;font-weight:400;">Sweep</div>
<svg style="left:0;top:0" width="1000" height="694"><defs><linearGradient id="kg345" x1="0" y1="0" x2="0.2" y2="1"><stop offset="0" stop-color="#b4b4b4"/><stop offset="1" stop-color="#8a8a8a"/></linearGradient><linearGradient id="kr345" x1="0" y1="0" x2="0.2" y2="1"><stop offset="0" stop-color="#a6a6a6"/><stop offset="1" stop-color="#cdcdcd"/></linearGradient></defs><circle cx="345.3" cy="589.15" r="21.4" fill="#1a1a1b"/><path d="M331.79 602.66 A19.1 19.1 0 0 1 341.33 570.47" fill="none" stroke="#80c65c" stroke-width="4.4"/><circle cx="345.3" cy="589.15" r="16.7" fill="url(#kr345)" stroke="#161616" stroke-width="0.9"/><circle cx="345.3" cy="589.15" r="14" fill="url(#kg345)"/><path d="M341.25 570.08 L343.57 581.03" stroke="#0e0e0e" stroke-width="2.7" stroke-linecap="round"/><path d="M327.50 608.92 L326.16 610.40 M363.10 608.92 L364.44 610.40" stroke="#8a8a8a" stroke-width="1.3"/></svg>
<svg style="left:0;top:0" width="1000" height="694"><defs><linearGradient id="kg606" x1="0" y1="0" x2="0.2" y2="1"><stop offset="0" stop-color="#b4b4b4"/><stop offset="1" stop-color="#8a8a8a"/></linearGradient><linearGradient id="kr606" x1="0" y1="0" x2="0.2" y2="1"><stop offset="0" stop-color="#a6a6a6"/><stop offset="1" stop-color="#cdcdcd"/></linearGradient></defs><circle cx="606.2" cy="589.0" r="21.4" fill="#1a1a1b"/><path d="M592.69 602.51 A19.1 19.1 0 0 1 617.96 573.95" fill="none" stroke="#80c65c" stroke-width="4.4"/><circle cx="606.2" cy="589.0" r="16.7" fill="url(#kr606)" stroke="#161616" stroke-width="0.9"/><circle cx="606.2" cy="589.0" r="14" fill="url(#kg606)"/><path d="M618.21 573.63 L611.31 582.46" stroke="#0e0e0e" stroke-width="2.7" stroke-linecap="round"/><path d="M588.40 608.77 L587.06 610.25 M624.00 608.77 L625.34 610.25" stroke="#8a8a8a" stroke-width="1.3"/></svg>
<div class="t" style="left:318.5px;top:614.5px;font-size:10px;color:#8a8a8a;font-weight:400;">20</div>
<div class="t" style="left:340.5px;top:614.5px;font-size:10px;color:#8a8a8a;font-weight:400;">Hz</div>
<div class="t" style="left:358.5px;top:614.5px;font-size:10px;color:#8a8a8a;font-weight:400;">15k</div>
<div class="t" style="left:578px;top:614.5px;font-size:10px;color:#8a8a8a;font-weight:400;">-50</div>
<div class="t" style="left:600px;top:614.5px;font-size:10px;color:#8a8a8a;font-weight:400;">dB</div>
<div class="t" style="left:619px;top:614.5px;font-size:10px;color:#8a8a8a;font-weight:400;">+10</div>
<div class="a" style="left:320px;top:633px;width:50px;height:21.6px;background:#1c1c1d;border:1px solid #0f0f10;border-radius:3px"></div>
<div class="t" style="left:332.5px;top:637px;font-size:12.6px;color:#ececec;font-weight:700;">1.0k</div>
<div class="a" style="left:581px;top:633.5px;width:49.6px;height:21px;background:#1c1c1d;border:1px solid #0f0f10;border-radius:3px"></div>
<div class="t" style="left:596px;top:637.5px;font-size:12.6px;color:#ececec;font-weight:700;">-12</div>
<div class="a" style="left:498px;top:549px;width:30px;height:21.5px;background:#18181a;border:1px solid #454549;border-radius:1px"></div>
<svg style="left:498px;top:549px" width="30" height="22" viewBox="0 0 30 22"><path d="M3.4 11.5 L5.6 9.2 L7.0 10.8 L8.7 5.4 L11.0 13.0 L12.5 8.4 L14.7 13.7 L16.2 9.2 L17.8 12.2 L19.3 10.0 L21.5 13.7 L23.0 6.2 L24.6 13.0 L25.6 10.7 L26.5 16.0" fill="none" stroke="#8bc34a" stroke-width="1.3" stroke-linejoin="round"/></svg>
<div class="t" style="left:496.5px;top:573px;font-size:11.5px;color:#d0d0d0;font-weight:400;letter-spacing:-0.1px">Blanco</div>
<div class="a" style="left:498px;top:603.5px;width:30px;height:22px;background:transparent;border:1px solid #454549;border-radius:1px"></div>
<svg style="left:498px;top:603.5px" width="30" height="22" viewBox="0 0 30 22"><path d="M3.4 8.5 L7 12 L14 3.2 L17 15.3 L20 11.5 L24.6 19.1 L26.8 14.5" fill="none" stroke="#8a8a8a" stroke-width="1.2"/></svg>
<div class="t" style="left:501px;top:628px;font-size:11.5px;color:#d0d0d0;font-weight:400;letter-spacing:-0.4px">Rosa</div>
</body></html>
